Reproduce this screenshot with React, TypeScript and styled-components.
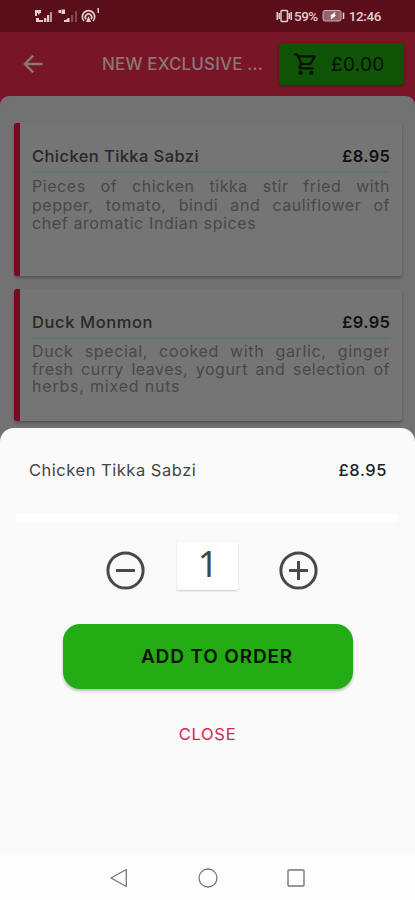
import React from 'react';
import styled, { createGlobalStyle } from 'styled-components';

const Global = createGlobalStyle`
  * { box-sizing: border-box; }
  body { margin: 0; background: #fafafa; }
  button { border: 0; padding: 0; background: none; font: inherit; color: inherit; }
`;

const Screen = styled.div`
  position: relative;
  width: 415px;
  height: 900px;
  overflow: hidden;
  background: #781527;
  font-family: Inter, 'Open Sans', sans-serif;
`;

const StatusBar = styled.div`
  display: flex;
  justify-content: space-between;
  height: 32px;
  padding: 0 34px 0 34px;
  background: #5a0e1a;
  color: #e3cfd1;
`;

const StatusGroup = styled.div`
  display: flex;
  align-items: center;
  svg { display: block; }
`;

const StatusText = styled.span<{ $track: number; $left: number }>`
  font-family: Roboto, sans-serif;
  font-weight: 500;
  font-size: 13.5px;
  letter-spacing: ${p => p.$track}px;
  margin-left: ${p => p.$left}px;
  line-height: 32px;
`;

const Header = styled.header`
  display: flex;
  align-items: center;
  height: 64px;
  padding: 0 11px 0 20px;
`;

const Title = styled.h1`
  flex: 1;
  margin: 0 0 0 56px;
  font-size: 17px;
  font-weight: 500;
  letter-spacing: 0.14px;
  white-space: nowrap;
  color: #8b7776;
`;

const Basket = styled.button`
  display: flex;
  align-items: center;
  width: 125px;
  height: 42px;
  padding-left: 14px;
  border-radius: 4px;
  background: #0f5406;
  color: #081006;
  font-size: 19px;
  letter-spacing: 0.3px;
  box-shadow: 0 1px 3px rgba(0, 0, 0, 0.35);
  svg { margin-right: 12px; }
`;

const Menu = styled.main`
  display: flex;
  flex-direction: column;
  gap: 13px;
  height: 500px;
  padding: 27px 13px 0 14px;
  border-radius: 9px 9px 0 0;
  background: #727272;
`;

const Card = styled.article<{ $height: number }>`
  flex: none;
  height: ${p => p.$height}px;
  padding: 22px 12px 0;
  border-left: 6px solid #790820;
  border-radius: 3px;
  background: #757575;
  box-shadow: 0 2px 3px rgba(0, 0, 0, 0.28);
`;

const CardHead = styled.div`
  display: flex;
  justify-content: space-between;
  height: 28px;
  border-bottom: 2px solid #5b7a72;
  line-height: 22px;
`;

const DishName = styled.span<{ $track: number }>`
  font-size: 16.5px;
  font-weight: 500;
  letter-spacing: ${p => p.$track}px;
  color: #282828;
`;

const DishPrice = styled.span`
  font-size: 16.5px;
  font-weight: 600;
  letter-spacing: 0.35px;
  margin-right: -0.35px;
  color: #121212;
`;

const Description = styled.div<{ $line: number }>`
  padding-top: 4px;
  font-size: 16px;
  line-height: ${p => p.$line}px;
  color: #484848;
`;

const Line = styled.div<{ $track: number; $last?: boolean }>`
  white-space: nowrap;
  letter-spacing: ${p => p.$track}px;
  text-align-last: ${p => (p.$last ? 'left' : 'justify')};
`;

const Sheet = styled.section`
  position: absolute;
  left: 0;
  right: 0;
  bottom: 0;
  display: flex;
  flex-direction: column;
  align-items: center;
  height: 472px;
  border-radius: 14px 14px 0 0;
  background: #fafafa;
  color: #333;
`;

const SheetHead = styled.div`
  display: flex;
  justify-content: space-between;
  width: 100%;
  height: 86px;
  padding: 31px 28px 0 29px;
  font-size: 16.5px;
  line-height: 23px;
`;

const SheetName = styled.span`
  letter-spacing: 0.52px;
  color: #444;
`;

const SheetPrice = styled.span`
  font-weight: 500;
  letter-spacing: 0.55px;
  color: #202020;
`;

const Divider = styled.div`
  width: 382px;
  height: 8px;
  margin-right: 2px;
  background: #fff;
`;

const Stepper = styled.div`
  display: flex;
  width: 212px;
  margin: 20px 0 0 9px;
`;

const StepButton = styled.button`
  height: 39px;
  margin-top: 9px;
  svg { display: block; }
`;

const Quantity = styled.div`
  width: 61px;
  height: 48px;
  margin: 0 41px 0 32px;
  border-radius: 2px;
  background: #fff;
  box-shadow: 0 1px 2px rgba(0, 0, 0, 0.2);
  font-family: 'Noto Sans', sans-serif;
  font-size: 36px;
  line-height: 44px;
  text-align: center;
  text-indent: 1px;
  color: #444;
`;

const AddButton = styled.button`
  width: 290px;
  height: 65px;
  margin: 34px 0 0 1px;
  padding-left: 18px;
  border-radius: 17px;
  background: #23ac13;
  color: #061503;
  font-size: 19px;
  font-weight: 600;
  letter-spacing: 0.85px;
  box-shadow: 0 2px 3px rgba(0, 0, 0, 0.25);
`;

const CloseButton = styled.button`
  height: 24px;
  margin-top: 33px;
  font-size: 16.5px;
  letter-spacing: 0.7px;
  color: #d02850;
`;

const SystemNav = styled.nav`
  display: flex;
  align-items: center;
  justify-content: space-between;
  width: 100%;
  height: 45px;
  margin-top: auto;
  padding: 0 109px;
  background: #fdfdfd;
`;

const SignalIcon = () => (
  <svg width="68" height="20" viewBox="0 0 68 20" fill="#e3cfd1">
    <path d="M1 4h6v3H5.5v1.5H4V7H3v3H1zM2 12h3v2h4v2H2zM10 12h2.3v4H10zM13 9h2.3v7H13z" />
    <path d="M16 6h2v10h-2z" opacity=".7" />
    <path d="M24.5 4H27v3h-2.5zM27.5 3.5H31V8h-3.5zM30 14h2l2-2h1.5v4H30z" />
    <path d="M37 9h2.3v7H37zM41 5h2v11h-2z" opacity=".3" />
    <g fill="none" stroke="#e3cfd1" strokeWidth="1.7">
      <path d="M50 15a6.2 6.2 0 1 1 9 0M52 13.2a3.2 3.2 0 1 1 5 0" />
    </g>
    <path d="m54.5 10 2.5 6h-5zM63.5 2H65v5h-1.5z" />
  </svg>
);

const VibrateIcon = () => (
  <svg width="17" height="16" viewBox="0 0 17 16" fill="none" stroke="#e3cfd1" strokeWidth="1.5">
    <rect x="5" y="2.5" width="6.5" height="11" rx="1" />
    <path d="M1.2 4v8M3.2 5v6M13.2 5v6M15.2 4v8" />
  </svg>
);

const BatteryIcon = () => (
  <svg width="23" height="14" viewBox="0 0 23 14">
    <rect x="1" y="1.5" width="18" height="10.5" rx="2" fill="#92616b" stroke="#cfaeb3" />
    <path d="m13 3.5-4.500 3.500h1.500L9 10l4.500-3.500H12z" fill="#fff" stroke="#fff" strokeWidth=".7" />
    <path d="M20.7 3.500h1.600V10h-1.600z" fill="#e3cfd1" />
  </svg>
);

const BatteryBox = styled.div`
  margin-left: 4px;
`;

const BackIcon = () => (
  <svg width="26" height="26" viewBox="0 0 26 26" fill="none" stroke="#8b7776" strokeWidth="2.3">
    <path d="M22.5 13H5M13.2 4.6 4.8 13l8.4 8.4" />
  </svg>
);

const CartIcon = () => (
  <svg width="26" height="26" viewBox="0 0 24 24" fill="#081006">
    <path d="M15.55 13c.75 0 1.41-.41 1.75-1.03l3.58-6.49A.996.996 0 0 0 20.01 4H5.21l-.94-2H1v2h2l3.6 7.59-1.35 2.44C4.52 15.37 5.48 17 7 17h12v-2H7l1.1-2zM6.16 6h12.15l-2.76 5H8.53zM7 18a2 2 0 1 0 0 4 2 2 0 0 0 0-4m10 0a2 2 0 1 0 0 4 2 2 0 0 0 0-4" />
  </svg>
);

const StepIcon = ({ plus }: { plus?: boolean }) => (
  <svg width="39" height="39" viewBox="0 0 39 39" fill="none" stroke="#484848" strokeWidth="3">
    <circle cx="19.5" cy="19.5" r="17.6" />
    <path d={plus ? 'M10 19.5h19M19.5 10v19' : 'M10 19.5h19'} />
  </svg>
);

interface Dish {
  name: string;
  track: number;
  price: string;
  height: number;
  line: number;
  lines: [string, number][];
}

const dishes: Dish[] = [
  {
    name: 'Chicken Tikka Sabzi', track: 0.42, price: '£8.95', height: 153, line: 18.5,
    lines: [
      ['Pieces of chicken tikka stir fried with', 0.55],
      ['pepper, tomato, bindi and cauliflower of', 0.55],
      ['chef aromatic Indian spices', 0.61],
    ],
  },
  {
    name: 'Duck Monmon', track: 0.6, price: '£9.95', height: 132, line: 17.5,
    lines: [
      ['Duck special, cooked with garlic, ginger', 0.65],
      ['fresh curry leaves, yogurt and selection of', 0.5],
      ['herbs, mixed nuts', 0.8],
    ],
  },
];

export default function App() {
  return (
    <Screen>
      <Global />
      <StatusBar>
        <StatusGroup><SignalIcon /></StatusGroup>
        <StatusGroup>
          <VibrateIcon />
          <StatusText $track={-0.55} $left={1}>59%</StatusText>
          <BatteryBox><BatteryIcon /></BatteryBox>
          <StatusText $track={-0.4} $left={4}>12:46</StatusText>
        </StatusGroup>
      </StatusBar>
      <Header>
        <BackIcon />
        <Title>NEW EXCLUSIVE ...</Title>
        <Basket><CartIcon />£0.00</Basket>
      </Header>
      <Menu>
        {dishes.map(d => (
          <Card key={d.name} $height={d.height}>
            <CardHead>
              <DishName $track={d.track}>{d.name}</DishName>
              <DishPrice>{d.price}</DishPrice>
            </CardHead>
            <Description $line={d.line}>
              {d.lines.map(([text, track], i) => (
                <Line key={text} $track={track} $last={i === 2}>{text}</Line>
              ))}
            </Description>
          </Card>
        ))}
      </Menu>
      <Sheet>
        <SheetHead>
          <SheetName>Chicken Tikka Sabzi</SheetName>
          <SheetPrice>£8.95</SheetPrice>
        </SheetHead>
        <Divider />
        <Stepper>
          <StepButton aria-label="Decrease"><StepIcon /></StepButton>
          <Quantity>1</Quantity>
          <StepButton aria-label="Increase"><StepIcon plus /></StepButton>
        </Stepper>
        <AddButton>ADD TO ORDER</AddButton>
        <CloseButton>CLOSE</CloseButton>
        <SystemNav>
          <svg width="20" height="20" viewBox="0 0 20 20" fill="none" stroke="#777" strokeWidth="1.3" strokeLinejoin="round"><path d="M17.3 1.5v17L2 10z" /></svg>
          <svg width="20" height="20" viewBox="0 0 20 20" fill="none" stroke="#777" strokeWidth="1.3"><circle cx="10" cy="10" r="9" /></svg>
          <svg width="20" height="20" viewBox="0 0 20 20" fill="none" stroke="#777" strokeWidth="1.4"><rect x="2" y="2" width="16" height="16" rx="1" /></svg>
        </SystemNav>
      </Sheet>
    </Screen>
  );
}
